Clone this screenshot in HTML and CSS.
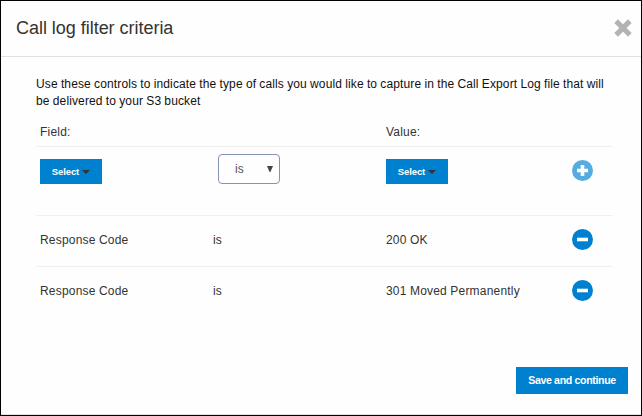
FILE: index.html
```html
<!DOCTYPE html>
<html lang="en">
<head>
<meta charset="utf-8">
<title>Call log filter criteria</title>
<link rel="stylesheet" href="styles.css">
</head>
<body>
<div class="modal">
  <header class="modal-header">
    <h1 class="title">Call log filter criteria</h1>
    <svg class="close" width="18" height="18" viewBox="0 0 18 18"><path d="M4 4 14 14M14 4 4 14" stroke="#b3b3b3" stroke-width="5.2" stroke-linecap="square"/></svg>
  </header>
  <main class="modal-body">
    <p class="intro">Use these controls to indicate the type of calls you would like to capture in the Call Export Log file that will<br>be delivered to your S3 bucket</p>
    <div class="row head">
      <span>Field:</span><span></span><span>Value:</span><span></span>
    </div>
    <div class="row controls">
      <span><button class="btn select-btn">Select<i class="caret"></i></button></span>
      <span class="operator"><span class="dropdown"><span>is</span><svg width="6" height="6" viewBox="0 0 6 6"><path d="M0 0H6L3.4 6H2.6Z" fill="#444"/></svg></span></span>
      <span><button class="btn select-btn">Select<i class="caret"></i></button></span>
      <svg class="icon" width="21" height="21" viewBox="0 0 21 21"><circle cx="10.5" cy="10.5" r="10.5" fill="#56abdf"/><path d="M10.5 5V16M5 10.5H16" stroke="#fff" stroke-width="3.6"/></svg>
    </div>
    <div class="row item">
      <span>Response Code</span><span>is</span><span>200 OK</span>
      <svg class="icon" width="21" height="21" viewBox="0 0 21 21"><circle cx="10.5" cy="10.5" r="10.5" fill="#0081cf"/><path d="M5 10.5H16" stroke="#fff" stroke-width="3.6"/></svg>
    </div>
    <div class="row item">
      <span>Response Code</span><span>is</span><span>301 Moved Permanently</span>
      <svg class="icon" width="21" height="21" viewBox="0 0 21 21"><circle cx="10.5" cy="10.5" r="10.5" fill="#0081cf"/><path d="M5 10.5H16" stroke="#fff" stroke-width="3.6"/></svg>
    </div>
  </main>
  <footer class="modal-footer"><button class="btn save">Save and continue</button></footer>
</div>
</body>
</html>
```

FILE: styles.css
```css
* { box-sizing: border-box; }
body {
  margin: 0;
  font-family: "Liberation Sans", Arial, sans-serif;
  font-size: 12px;
  color: #333;
}
.modal {
  display: flex;
  flex-direction: column;
  width: 642px;
  height: 416px;
  border: 1px solid #000;
  background: #fefefe;
}
.modal-header {
  display: flex;
  align-items: center;
  justify-content: space-between;
  height: 56px;
  padding: 0 9px 2px 15px;
  border-bottom: 1px solid #e1e1e1;
}
.title {
  margin: 0;
  font-size: 18px;
  font-weight: 400;
  line-height: 22px;
  letter-spacing: -0.03px;
}
.close { display: block; }
.modal-body {
  flex: 1;
  padding: 19px 28px 0 35px;
}
.intro {
  margin: 0 0 14px;
  color: #111;
  line-height: 17px;
  letter-spacing: 0.13px;
  word-spacing: -0.3px;
  white-space: nowrap;
}
.row {
  display: grid;
  grid-template-columns: 173px 173px 186px 1fr;
  padding-left: 4px;
  border-bottom: 1px solid #f0f0f0;
  letter-spacing: 0.2px;
  word-spacing: -0.2px;
}
.head {
  height: 23px;
  line-height: 17px;
}
.controls {
  height: 69px;
  padding-top: 7px;
}
.controls .icon { margin-top: 6px; }
.operator { padding-left: 5px; }
.dropdown {
  display: flex;
  align-items: center;
  justify-content: space-between;
  width: 62px;
  height: 30px;
  padding: 0 6px 0 16px;
  border: 1px solid #8494b2;
  border-radius: 4px;
  color: #555;
}
.btn {
  display: flex;
  align-items: center;
  justify-content: center;
  padding: 0;
  border: 0;
  background: #0081cf;
  color: #fff;
  font-family: inherit;
  font-weight: 700;
}
.select-btn {
  width: 62px;
  height: 25px;
  margin-top: 5px;
  gap: 3px;
  font-size: 9.5px;
  letter-spacing: -0.1px;
}
.caret {
  border: 4px solid transparent;
  border-top-color: #333;
  border-bottom: 0;
}
.item {
  height: 51px;
  padding-bottom: 3px;
  align-items: center;
}
.item:last-child { border-bottom-color: transparent; }
.modal-footer {
  display: flex;
  justify-content: flex-end;
  padding: 0 13px 20px 0;
  border-bottom: 1px solid #e1e1e1;
}
.save {
  width: 112px;
  height: 27px;
  padding-bottom: 1px;
  font-size: 10.6px;
  letter-spacing: -0.35px;
}
```
